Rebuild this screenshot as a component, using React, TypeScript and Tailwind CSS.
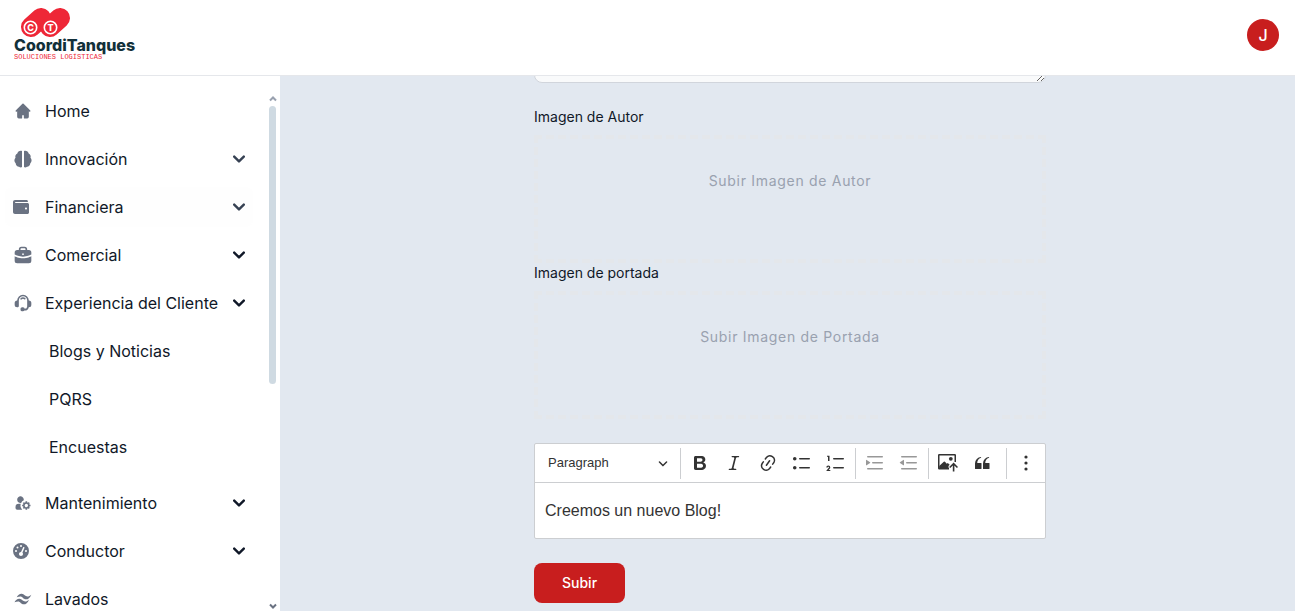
import type { ReactNode } from 'react';
import { FaWallet } from 'react-icons/fa';
import { FaGaugeHigh } from 'react-icons/fa6';

const HALF_BRAIN =
  'M10.800 2.400C8.500 1.200 5.500 3 5.200 5.500 3.200 6.500 2.300 8.800 3 10.500 1.200 12.200 1.200 15.300 3.200 17 3.400 19.600 5.300 21.300 7.200 21.200 8.300 22.300 10 22.300 10.800 21.600Z';

function Glyph({ children }: { children: ReactNode }) {
  return (
    <svg className="size-5" viewBox="0 0 24 24" fill="currentColor" fillRule="evenodd" aria-hidden="true">
      {children}
    </svg>
  );
}

const icons = {
  home: (
    <Glyph>
      <path d="M11.293 3.293a1 1 0 0 1 1.414 0l6 6 2 2a1 1 0 0 1-1.414 1.414L19 12.414V19a2 2 0 0 1-2 2h-3a1 1 0 0 1-1-1v-3h-2v3a1 1 0 0 1-1 1H7a2 2 0 0 1-2-2v-6.586l-.293.293a1 1 0 0 1-1.414-1.414l2-2 6-6Z" />
    </Glyph>
  ),
  brain: (
    <Glyph>
      <path d={HALF_BRAIN} />
      <path d={HALF_BRAIN} transform="matrix(-1 0 0 1 24 0)" />
    </Glyph>
  ),
  wallet: <FaWallet className="size-4" aria-hidden="true" />,
  briefcase: (
    <Glyph>
      <path d="M10 2a3 3 0 0 0-3 3v1H5a3 3 0 0 0-3 3v2.382l1.447.723.005.003.027.013.12.056c.108.05.272.123.486.212.429.177 1.056.416 1.834.655C7.481 13.524 9.63 14 12 14c2.372 0 4.52-.475 6.08-.956.78-.24 1.406-.478 1.835-.655a14.028 14.028 0 0 0 .606-.268l.027-.013.005-.002L22 11.381V9a3 3 0 0 0-3-3h-2V5a3 3 0 0 0-3-3h-4Zm5 4V5a1 1 0 0 0-1-1h-4a1 1 0 0 0-1 1v1h6Zm-3 4a1 1 0 1 0 0 2h.01a1 1 0 1 0 0-2H12Z" />
      <path d="M21.447 13.894 22 13.618V19a3 3 0 0 1-3 3H5a3 3 0 0 1-3-3v-5.382l.553.276.21.1c.13.06.318.144.557.242.478.198 1.163.46 2.01.72C7.019 15.476 9.37 16 12 16c2.628 0 4.98-.525 6.67-1.044a22.95 22.95 0 0 0 2.01-.72c.24-.098.5-.21.767-.342Z" />
    </Glyph>
  ),
  headset: (
    <Glyph>
      <path d="M12 2a7 7 0 0 0-7 7 3 3 0 0 0-3 3v2a3 3 0 0 0 3 3h1a1 1 0 0 0 1-1V9a5 5 0 1 1 10 0v7.083A2.919 2.919 0 0 1 14.083 19H14a2 2 0 0 0-2-2h-1a2 2 0 0 0-2 2v1a2 2 0 0 0 2 2h1a2 2 0 0 0 1.732-1h.351a4.917 4.917 0 0 0 4.83-4H19a3 3 0 0 0 3-3v-2a3 3 0 0 0-3-3 7 7 0 0 0-7-7Zm1.45 3.275a4 4 0 0 0-4.352.976 1 1 0 0 0 1.452 1.376 2.001 2.001 0 0 1 2.836-.067 1 1 0 1 0 1.386-1.442 4 4 0 0 0-1.321-.843Z" />
    </Glyph>
  ),
  userCog: (
    <Glyph>
      <path d="M17 10v1.126c.367.095.714.24 1.032.428l.796-.797 1.415 1.415-.797.796c.188.318.333.665.428 1.032H21v2h-1.126c-.095.367-.24.714-.428 1.032l.797.796-1.415 1.415-.796-.797a3.979 3.979 0 0 1-1.032.428V20h-2v-1.126a3.977 3.977 0 0 1-1.032-.428l-.796.797-1.415-1.415.797-.796A3.975 3.975 0 0 1 12.126 16H11v-2h1.126c.095-.367.24-.714.428-1.032l-.797-.796 1.415-1.415.796.797A3.977 3.977 0 0 1 15 11.126V10h2Zm.406 3.578.016.016c.354.358.574.85.578 1.392v.028a2 2 0 0 1-3.409 1.406l-.01-.012a2 2 0 0 1 2.826-2.83ZM5 8a4 4 0 1 1 7.938.703 7.029 7.029 0 0 0-3.235 3.235A4 4 0 0 1 5 8Zm4.29 5H7a4 4 0 0 0-4 4v1a2 2 0 0 0 2 2h6.101a6.979 6.979 0 0 1-1.81-7Z" />
    </Glyph>
  ),
  gauge: <FaGaugeHigh className="size-4" aria-hidden="true" />,
  waves: (
    <Glyph>
      <path d="M4.500 9.800C6 7 8 5.500 10.500 5.700c3 .2 4 3.300 6.800 3.300 1.700 0 3-.8 4.700-2.200-1.600 3.800-4 5.700-6.600 5.600-3-.1-4-3.400-6.600-3.400-1.500 0-2.700.2-4.300.8Z" />
      <path d="M1.800 15.800C3.300 13 5.300 11.500 7.800 11.700c3 .2 4 3.300 6.800 3.300 1.700 0 3-.8 4.700-2.200-1.600 3.800-4 5.700-6.600 5.600-3-.1-4-3.400-6.600-3.400-1.500 0-2.700.2-4.300.8Z" />
    </Glyph>
  ),
};

type Item = { label: string; icon: ReactNode; menu?: boolean; muted?: boolean; children?: string[] };

const items: Item[] = [
  { label: 'Home', icon: icons.home },
  { label: 'Innovación', icon: icons.brain, menu: true, muted: true },
  { label: 'Financiera', icon: icons.wallet, menu: true, muted: true },
  { label: 'Comercial', icon: icons.briefcase, menu: true },
  {
    label: 'Experiencia del Cliente',
    icon: icons.headset,
    menu: true,
    children: ['Blogs y Noticias', 'PQRS', 'Encuestas'],
  },
  { label: 'Mantenimiento', icon: icons.userCog, menu: true },
  { label: 'Conductor', icon: icons.gauge, menu: true },
  { label: 'Lavados', icon: icons.waves },
];

function Logo() {
  return (
    <svg className="h-14 w-[122px]" viewBox="0 0 122 56" role="img" aria-label="CoordiTanques">
      <g stroke="#ee2737" strokeWidth="20" strokeLinecap="round">
        <path d="M17 21 27 12" />
        <path d="M36 21 46 12" />
      </g>
      <g fill="none" stroke="#fff" strokeWidth="1.600">
        <circle cx="16.500" cy="21.500" r="6.200" />
        <circle cx="36.500" cy="21.500" r="6.200" />
      </g>
      <g fill="#fff" fontFamily="Inter, sans-serif" fontWeight="800" fontSize="9" textAnchor="middle">
        <text x="16.500" y="25">C</text>
        <text x="36.500" y="25">T</text>
      </g>
      <text x="0" y="45" fill="#12303a" fontFamily="Inter, sans-serif" fontWeight="800" fontSize="16">
        CoordiTanques
      </text>
      <text x="0" y="53" fill="#ee2737" fontFamily="'Liberation Mono', monospace" fontSize="7">
        SOLUCIONES LOGÍSTICAS
      </text>
    </svg>
  );
}

function Sidebar() {
  const row = 'flex h-10 w-full items-center rounded-lg p-2 text-left';
  return (
    <aside className="flex w-[280px] shrink-0 bg-white pt-[15px]">
      <nav className="min-w-0 flex-1 overflow-hidden pl-[5px]">
        <ul className="flex flex-col gap-2">
          {items.map((item) => (
            <li key={item.label}>
              {item.menu ? (
                <button type="button" className={`${row} ${item.label === 'Financiera' ? 'bg-[#fefefe]' : ''}`}>
                  <span className="w-5 shrink-0 text-gray-500">{item.icon}</span>
                  <span className="ml-3 flex-1 whitespace-nowrap">{item.label}</span>
                  <svg
                    className={`size-3 shrink-0 ${item.muted ? 'text-gray-700' : 'text-gray-900'}`}
                    viewBox="0 0 10 6"
                    fill="none"
                    stroke="currentColor"
                    strokeWidth="2"
                    strokeLinecap="round"
                    strokeLinejoin="round"
                    aria-hidden="true"
                  >
                    <path d="m1 1 4 4 4-4" />
                  </svg>
                </button>
              ) : (
                <a href="#" className={row}>
                  <span className="w-5 shrink-0 text-gray-500">{item.icon}</span>
                  <span className="ml-3">{item.label}</span>
                </a>
              )}
              {item.children && (
                <ul className="flex flex-col gap-2 py-2">
                  {item.children.map((child) => (
                    <li key={child}>
                      <a href="#" className="flex h-10 items-center rounded-lg pl-11">
                        {child}
                      </a>
                    </li>
                  ))}
                </ul>
              )}
            </li>
          ))}
        </ul>
      </nav>
      <div className="mr-1 ml-4 flex w-[7px] shrink-0 flex-col items-center" aria-hidden="true">
        <svg className="mt-1 h-2 w-2 text-gray-400" viewBox="0 0 8 8" fill="none" stroke="currentColor" strokeWidth="2">
          <path d="m1 5.500 3-3 3 3" />
        </svg>
        <div className="mt-[3px] h-[278px] w-full rounded-full bg-[#cfdae2]" />
        <svg
          className="mt-auto mb-px h-2 w-2 text-gray-500"
          viewBox="0 0 8 8"
          fill="none"
          stroke="currentColor"
          strokeWidth="2"
        >
          <path d="m1 2.500 3 3 3-3" />
        </svg>
      </div>
    </aside>
  );
}

function UploadField({ id, label, hint }: { id: string; label: string; hint: string }) {
  return (
    <div>
      <label htmlFor={id} className="mb-2 block text-sm text-gray-900">
        {label}
      </label>
      <label htmlFor={id} className="flex h-32 flex-col items-center border-4 border-dashed border-[#e4e7eb] pt-8">
        <span className="text-sm tracking-wider text-gray-400">{hint}</span>
        <input id={id} type="file" className="sr-only" />
      </label>
    </div>
  );
}

function Tool({ label, disabled, children }: { label: string; disabled?: boolean; children: ReactNode }) {
  return (
    <button
      type="button"
      aria-label={label}
      disabled={disabled}
      className="flex h-8 w-[34px] shrink-0 items-center justify-center disabled:opacity-50"
    >
      <svg className="size-5" viewBox="0 0 20 20" fill="currentColor" aria-hidden="true">
        {children}
      </svg>
    </button>
  );
}

function Divider() {
  return <span className="mx-0.5 h-[31px] w-px shrink-0 bg-[#ccced1]" />;
}

function Editor() {
  return (
    <div className="mt-6 rounded-xs border border-[#ccced1] bg-white font-['Liberation_Sans',sans-serif] text-[#333]">
      <div
        className="flex h-[39px] items-center border-b border-[#ccced1] pr-0.5"
        role="toolbar"
        aria-label="Editor toolbar"
      >
        <button type="button" className="flex w-[143px] shrink-0 items-center justify-between pr-[10px] pl-[13px] text-[13px]">
          <span>Paragraph</span>
          <svg className="size-[10px]" viewBox="0 0 10 10" fill="currentColor" aria-hidden="true">
            <path d="M.941 4.523a.75.75 0 1 1 1.060-1.060l3.006 3.005 3.005-3.005a.75.75 0 1 1 1.060 1.060l-3.549 3.550a.75.75 0 0 1-1.168-.136L.941 4.523z" />
          </svg>
        </button>
        <Divider />
        <Tool label="Bold">
          <path d="M10.187 17H5.773c-.637 0-1.092-.138-1.364-.415-.273-.277-.409-.718-.409-1.323V4.738c0-.617.14-1.062.419-1.332.279-.27.73-.406 1.354-.406h4.68c.69 0 1.288.041 1.793.124.506.083.96.242 1.36.478.341.197.644.447.906.75a3.262 3.262 0 0 1 .808 2.162c0 1.401-.722 2.426-2.167 3.075C15.05 10.175 16 11.315 16 13.01a3.756 3.756 0 0 1-2.296 3.504 6.1 6.1 0 0 1-1.517.377c-.571.073-1.238.11-2 .11zm-.217-6.217H7v4.087h3.069c1.977 0 2.965-.69 2.965-2.072 0-.707-.256-1.22-.768-1.537-.512-.319-1.277-.478-2.296-.478zM7 5.13v3.619h2.606c.729 0 1.292-.067 1.69-.2a1.6 1.6 0 0 0 .91-.765c.165-.267.247-.566.247-.897 0-.707-.26-1.176-.778-1.409-.519-.232-1.31-.348-2.375-.348H7z" />
        </Tool>
        <Tool label="Italic">
          <path d="m9.586 14.633.021.004c-.036.335.095.655.393.962.082.083.173.15.274.201h1.474a.6.6 0 1 1 0 1.2H5.304a.6.6 0 0 1 0-1.2h1.15c.474-.07.809-.182 1.005-.334.157-.122.291-.32.404-.597l2.416-9.55a1.053 1.053 0 0 0-.281-.823 1.12 1.12 0 0 0-.442-.296H8.15a.6.6 0 0 1 0-1.2h6.443a.6.6 0 1 1 0 1.2h-1.195c-.376.056-.65.155-.823.296-.215.175-.423.439-.623.79l-2.366 9.347z" />
        </Tool>
        <Tool label="Link">
          <path d="m11.077 15 .991-1.416a.75.75 0 1 1 1.229.86l-1.148 1.64a.748.748 0 0 1-.217.206 5.251 5.251 0 0 1-8.503-5.955.741.741 0 0 1 .12-.274l1.147-1.639a.75.75 0 1 1 1.228.86L4.933 10.7l.006.003a3.75 3.75 0 0 0 6.132 4.294l.006.004zm5.494-5.335a.748.748 0 0 1-.12.274l-1.147 1.639a.75.75 0 1 1-1.228-.86l.86-1.23a3.75 3.75 0 0 0-6.144-4.301l-.86 1.229a.75.75 0 0 1-1.229-.86l1.148-1.64a.748.748 0 0 1 .217-.206 5.251 5.251 0 0 1 8.503 5.955zm-4.563-2.532a.75.75 0 0 1 .184 1.045l-3.155 4.505a.75.75 0 1 1-1.229-.86l3.155-4.506a.75.75 0 0 1 1.045-.184z" />
        </Tool>
        <Tool label="Bulleted List">
          <path d="M7 5.75c0 .414.336.75.75.75h9.5a.75.75 0 1 0 0-1.5h-9.5a.75.75 0 0 0-.75.75zm-6 0C1 4.784 1.777 4 2.75 4c.966 0 1.75.777 1.75 1.75 0 .966-.777 1.75-1.75 1.75C1.784 7.5 1 6.723 1 5.75zm6 9c0 .414.336.75.75.75h9.5a.75.75 0 1 0 0-1.5h-9.5a.75.75 0 0 0-.75.75zm-6 0c0-.966.777-1.75 1.75-1.75.966 0 1.75.777 1.75 1.75 0 .966-.777 1.75-1.75 1.75-.966 0-1.75-.777-1.75-1.75z" />
        </Tool>
        <Tool label="Numbered List">
          <path d="M7 5.75c0 .414.336.75.75.75h9.5a.75.75 0 1 0 0-1.5h-9.5a.75.75 0 0 0-.75.75zM3.500 3v5H2V3.700H1v-1h2.500V3zM.343 17.857l2.590-3.257H2.920a.6.6 0 1 0-1.040 0H.302a2 2 0 1 1 3.995 0h-.001c-.048.405-.160.734-.333.988-.175.254-.590.692-1.244 1.312H4.300v1h-4l.043-.043zM7 14.750c0 .414.336.75.75.75h9.5a.75.75 0 1 0 0-1.5h-9.5a.75.75 0 0 0-.75.75z" />
        </Tool>
        <Divider />
        <Tool label="Increase indent" disabled>
          <path d="M2 3.75c0 .414.336.75.75.75h14.5a.75.75 0 1 0 0-1.5H2.75a.75.75 0 0 0-.75.75zm5 6c0 .414.336.75.75.75h9.5a.75.75 0 1 0 0-1.5h-9.5a.75.75 0 0 0-.75.75zM2.75 16.5h14.5a.75.75 0 1 0 0-1.5H2.75a.75.75 0 1 0 0 1.5zM1.632 6.95 5.02 9.358a.4.4 0 0 1-.013.661l-3.39 2.207A.4.4 0 0 1 1 11.892V7.275a.4.4 0 0 1 .632-.326z" />
        </Tool>
        <Tool label="Decrease indent" disabled>
          <path d="M2 3.75c0 .414.336.75.75.75h14.5a.75.75 0 1 0 0-1.5H2.75a.75.75 0 0 0-.75.75zm5 6c0 .414.336.75.75.75h9.5a.75.75 0 1 0 0-1.5h-9.5a.75.75 0 0 0-.75.75zM2.75 16.5h14.5a.75.75 0 1 0 0-1.5H2.75a.75.75 0 1 0 0 1.5zM4.368 6.95.98 9.358a.4.4 0 0 0 .013.661l3.39 2.207A.4.4 0 0 0 5 11.892V7.275a.4.4 0 0 0-.632-.326z" />
        </Tool>
        <Divider />
        <Tool label="Insert image">
          <path
            fillRule="evenodd"
            d="M1.200 1h15.600A1.200 1.200 0 0 1 18 2.200V9h-1.500V2.500h-15v12.300H11v1.700H1.200A1.200 1.200 0 0 1 0 15.300V2.200A1.200 1.200 0 0 1 1.200 1Z"
          />
          <circle cx="12.800" cy="5.800" r="1.900" />
          <path d="m1.200 13 4.600-4.200a.8.8 0 0 1 1.100 0l1.900 2 1-.9 1.900 1.900-1.200 1.200V16H1.200v-3Z" />
          <path d="M15.600 9.600 20 14l-1.100 1.100-2.500-2.500V18.500h-1.600v-5.900l-2.500 2.500-1.100-1.100 4.400-4.400Z" />
        </Tool>
        <Tool label="Block quote">
          <path d="M3 10.423a6.5 6.5 0 0 1 6.056-6.408l.038.67C6.448 5.423 5.354 7.663 5.22 10H9c.552 0 .5.432.5.986v4.511c0 .554-.448.503-1 .503h-5c-.552 0-.5-.449-.5-1.003v-4.574zm8 0a6.5 6.5 0 0 1 6.056-6.408l.038.67c-2.646.739-3.74 2.979-3.873 5.315H17c.552 0 .5.432.5.986v4.511c0 .554-.448.503-1 .503h-5c-.552 0-.5-.449-.5-1.003v-4.574z" />
        </Tool>
        <div className="ml-auto flex items-center">
          <Divider />
          <Tool label="Show more items">
            <circle cx="10" cy="4" r="1.600" />
            <circle cx="10" cy="10" r="1.600" />
            <circle cx="10" cy="16" r="1.600" />
          </Tool>
        </div>
      </div>
      <div
        className="px-[10px] py-4 text-base leading-[23px]"
        role="textbox"
        aria-label="Contenido del blog"
        contentEditable
        suppressContentEditableWarning
      >
        <p>Creemos un nuevo Blog!</p>
      </div>
    </div>
  );
}

export default function App() {
  return (
    <div className="flex h-screen flex-col overflow-hidden bg-[#e2e8f0] font-[Inter,sans-serif] text-gray-900">
      <header className="flex h-[76px] shrink-0 items-start justify-between border-b border-gray-200 bg-white pt-[6px] pr-4 pl-[14px]">
        <a href="#" className="block">
          <Logo />
        </a>
        <button
          type="button"
          className="mt-[13px] flex size-8 items-center justify-center rounded-full bg-[#c81e1e] font-medium text-white"
        >
          J
        </button>
      </header>
      <div className="flex min-h-0 flex-1">
        <Sidebar />
        <main className="min-w-0 flex-1 overflow-hidden pl-[5px]">
          <form className="mx-auto max-w-lg">
            <div className="mb-6 flex h-[7px] items-end overflow-hidden">
              <textarea
                aria-label="Descripción"
                className="h-24 w-full shrink-0 resize-y rounded-lg border border-gray-300 bg-gray-50"
              />
            </div>
            <UploadField id="autor" label="Imagen de Autor" hint="Subir Imagen de Autor" />
            <UploadField id="portada" label="Imagen de portada" hint="Subir Imagen de Portada" />
            <Editor />
            <button
              type="submit"
              className="mt-6 rounded-lg bg-[#c81e1e] px-7 py-[10px] text-sm font-medium text-white"
            >
              Subir
            </button>
          </form>
        </main>
      </div>
    </div>
  );
}
